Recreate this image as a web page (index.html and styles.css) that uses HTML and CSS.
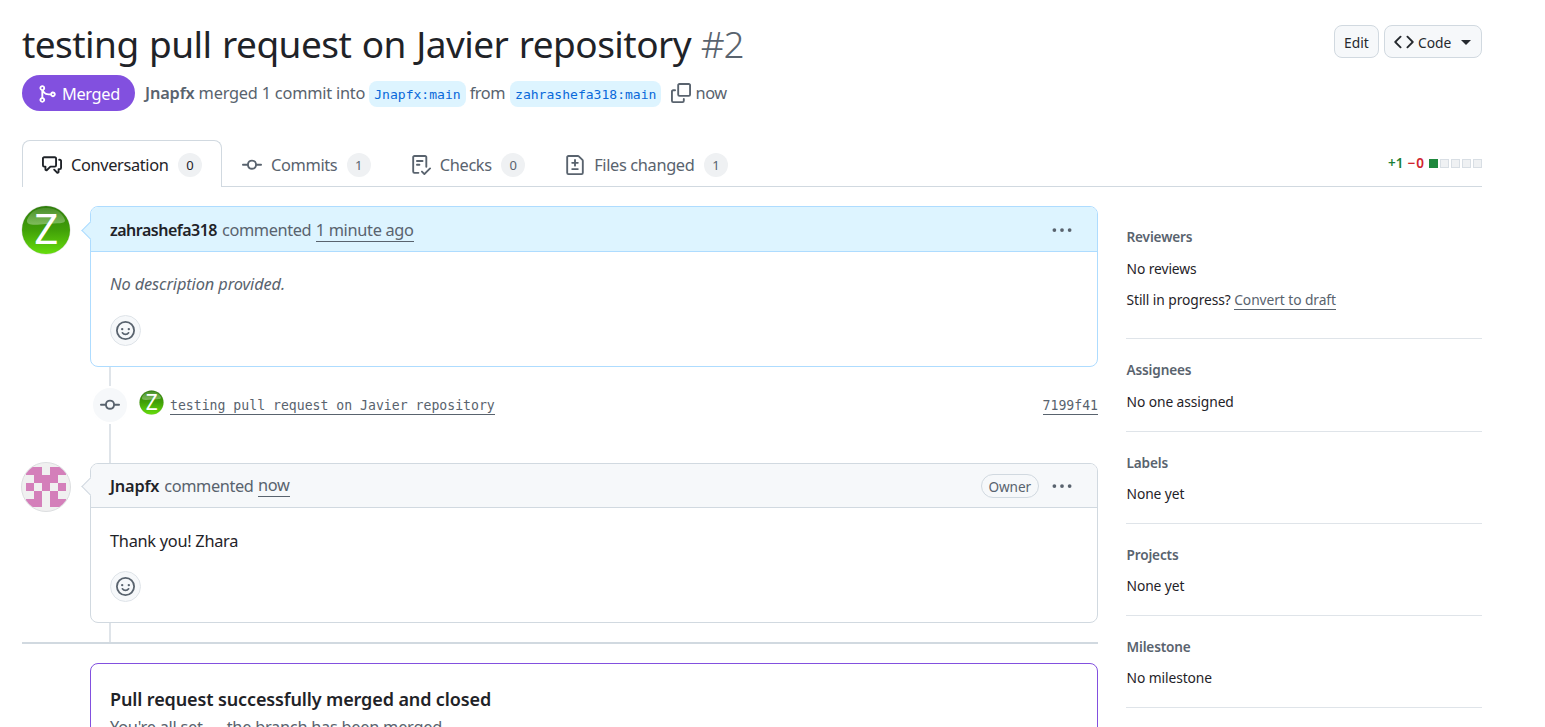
FILE: index.html
```html
<!DOCTYPE html>
<html lang="en">
<head>
<meta charset="utf-8">
<title>testing pull request on Javier repository #2</title>
<link rel="stylesheet" href="styles.css">
</head>
<body>
<svg class="defs" width="0" height="0">
  <defs>
    <linearGradient id="green" x1="0" y1="0" x2="0" y2="1">
      <stop offset="0" stop-color="#2f7d0c"/><stop offset=".5" stop-color="#41a008"/><stop offset="1" stop-color="#66dd0c"/>
    </linearGradient>
    <linearGradient id="gloss" x1="0" y1="0" x2="0" y2="1">
      <stop offset="0" stop-color="#fff" stop-opacity=".12"/><stop offset="1" stop-color="#fff" stop-opacity=".34"/>
    </linearGradient>
    <symbol id="z-avatar" viewBox="0 0 50 50">
      <circle cx="25" cy="25" r="24.5" fill="#d9dcd9"/>
      <circle cx="25" cy="25" r="24" fill="url(#green)"/>
      <path d="M6 15C10 5 18 3 25 3s15 2 19 12c1 4-8 3-19 4S5 21 6 15Z" fill="url(#gloss)"/>
      <text x="25.3" y="39" text-anchor="middle" font-family="Noto Sans, sans-serif" font-size="42" fill="#fff">Z</text>
    </symbol>
    <symbol id="commit" viewBox="0 0 16 16"><path d="M11.93 8.5a4.002 4.002 0 0 1-7.86 0H.75a.75.75 0 0 1 0-1.5h3.32a4.002 4.002 0 0 1 7.86 0h3.32a.75.75 0 0 1 0 1.5Zm-1.43-.75a2.5 2.5 0 1 0-5 0 2.5 2.5 0 0 0 5 0Z"/></symbol>
    <symbol id="smiley" viewBox="0 0 16 16"><circle cx="8" cy="8" r="7.25" fill="none" stroke="currentColor" stroke-width="1.5"/><circle cx="5.2" cy="6.8" r="1"/><circle cx="10.8" cy="6.8" r="1"/><path d="M5.4 9.9C6 10.8 6.9 11.2 8 11.2s2-.4 2.6-1.3" fill="none" stroke="currentColor" stroke-width="1.4" stroke-linecap="round"/></symbol>
    <symbol id="kebab" viewBox="0 0 16 16"><circle cx="1.9" cy="8" r="1.5"/><circle cx="8" cy="8" r="1.5"/><circle cx="14.1" cy="8" r="1.5"/></symbol>
  </defs>
</svg>
<div class="page">
  <header class="head">
    <h1 class="title"><span class="title-text">testing pull request on Javier repository</span> <span class="number">#2</span></h1>
    <div class="actions">
      <button class="btn btn-edit"><span>Edit</span></button>
      <button class="btn btn-code">
        <svg width="20" height="20" viewBox="0 0 16 16"><path d="m11.28 3.22 4.25 4.25a.75.75 0 0 1 0 1.06l-4.25 4.25a.749.749 0 0 1-1.275-.326.749.749 0 0 1 .215-.734L13.94 8l-3.72-3.72a.749.749 0 0 1 .326-1.275.749.749 0 0 1 .734.215Zm-6.56 0a.751.751 0 0 1 1.042.018.751.751 0 0 1 .018 1.042L2.06 8l3.72 3.72a.749.749 0 0 1-.326 1.275.749.749 0 0 1-.734-.215L.47 8.53a.75.75 0 0 1 0-1.06Z"/></svg>
        <span>Code</span><i class="caret"></i>
      </button>
    </div>
  </header>

  <div class="meta">
    <span class="state"><svg width="20" height="20" viewBox="0 0 16 16"><path d="M5.45 5.154A4.25 4.25 0 0 0 9.25 7.5h1.378a2.251 2.251 0 1 1 0 1.5H9.25A5.734 5.734 0 0 1 5 7.123v3.505a2.25 2.25 0 1 1-1.5 0V5.372a2.25 2.25 0 1 1 1.95-.218ZM4.25 13.5a.75.75 0 1 0 0-1.5.75.75 0 0 0 0 1.5Zm8.5-4.5a.75.75 0 1 0 0-1.5.75.75 0 0 0 0 1.5ZM5 3.25a.75.75 0 1 0 0 .005V3.25Z"/></svg><span class="state-text">Merged</span></span>
    <b class="who">Jnapfx</b><span class="action">merged 1 commit into</span><code class="branch">Jnapfx:main</code><span class="from">from</span><code class="branch branch-head">zahrashefa318:main</code>
    <svg class="copy" width="20" height="20" viewBox="0 0 16 16"><path d="M0 6.75C0 5.784.784 5 1.75 5h1.5a.75.75 0 0 1 0 1.5h-1.5a.25.25 0 0 0-.25.25v7.5c0 .138.112.25.25.25h7.5a.25.25 0 0 0 .25-.25v-1.5a.75.75 0 0 1 1.5 0v1.5A1.75 1.75 0 0 1 9.25 16h-7.5A1.75 1.75 0 0 1 0 14.25Z"/><path d="M5 1.75C5 .784 5.784 0 6.75 0h7.5C15.216 0 16 .784 16 1.75v7.5A1.75 1.75 0 0 1 14.25 11h-7.5A1.75 1.75 0 0 1 5 9.25Zm1.75-.25a.25.25 0 0 0-.25.25v7.5c0 .138.112.25.25.25h7.5a.25.25 0 0 0 .25-.25v-7.5a.25.25 0 0 0-.25-.25Z"/></svg>
    <span class="when">now</span>
  </div>

  <nav class="tabs">
    <a class="tab active"><svg width="20" height="20" viewBox="0 0 16 16"><path d="M1.75 1h8.5c.966 0 1.75.784 1.75 1.75v5.5A1.75 1.75 0 0 1 10.25 10H7.061l-2.574 2.573A1.458 1.458 0 0 1 2 11.543V10h-.25A1.75 1.75 0 0 1 0 8.25v-5.5C0 1.784.784 1 1.75 1ZM1.5 2.75v5.5c0 .138.112.25.25.25h1a.75.75 0 0 1 .75.75v2.19l2.72-2.72a.749.749 0 0 1 .53-.22h3.5a.25.25 0 0 0 .25-.25v-5.5a.25.25 0 0 0-.25-.25h-8.5a.25.25 0 0 0-.25.25Zm13 2a.25.25 0 0 0-.25-.25h-.5a.75.75 0 0 1 0-1.5h.5c.966 0 1.75.784 1.75 1.75v5.5A1.75 1.75 0 0 1 14.25 12H14v1.543a1.458 1.458 0 0 1-2.487 1.03L9.22 12.28a.749.749 0 0 1 .326-1.275.749.749 0 0 1 .734.215l2.22 2.22v-2.19a.75.75 0 0 1 .75-.75h1a.25.25 0 0 0 .25-.25Z"/></svg><span class="label">Conversation</span><span class="count">0</span></a>
    <a class="tab"><svg width="20" height="20"><use href="#commit"/></svg><span class="label">Commits</span><span class="count">1</span></a>
    <a class="tab"><svg width="20" height="20" viewBox="0 0 16 16"><path d="M2.5 1.75v11.5c0 .138.112.25.25.25h3.17a.75.75 0 0 1 0 1.5H2.75A1.75 1.75 0 0 1 1 13.25V1.75C1 .784 1.784 0 2.75 0h8.5C12.216 0 13 .784 13 1.75v7.736a.75.75 0 0 1-1.5 0V1.75a.25.25 0 0 0-.25-.25h-8.5a.25.25 0 0 0-.25.25Zm13.274 9.537-4.557 4.45a.75.75 0 0 1-1.055-.008l-1.943-1.95a.75.75 0 0 1 1.062-1.058l1.419 1.425 4.026-3.932a.75.75 0 1 1 1.048 1.074ZM4.75 4h4.5a.75.75 0 0 1 0 1.5h-4.5a.75.75 0 0 1 0-1.5ZM4 7.75A.75.75 0 0 1 4.75 7h2a.75.75 0 0 1 0 1.5h-2A.75.75 0 0 1 4 7.75Z"/></svg><span class="label">Checks</span><span class="count">0</span></a>
    <a class="tab"><svg width="20" height="20" viewBox="0 0 16 16"><path d="M1 1.75C1 .784 1.784 0 2.75 0h7.586c.464 0 .909.184 1.237.513l2.914 2.914c.329.328.513.773.513 1.237v9.586A1.75 1.75 0 0 1 13.25 16H2.75A1.75 1.75 0 0 1 1 14.25Zm1.75-.25a.25.25 0 0 0-.25.25v12.5c0 .138.112.25.25.25h10.5a.25.25 0 0 0 .25-.25V4.664a.25.25 0 0 0-.073-.177l-2.914-2.914a.25.25 0 0 0-.177-.073ZM8 3.25a.75.75 0 0 1 .75.75v1.5h1.5a.75.75 0 0 1 0 1.5h-1.5v1.5a.75.75 0 0 1-1.5 0V7h-1.5a.75.75 0 0 1 0-1.5h1.5V4A.75.75 0 0 1 8 3.25Zm-3 8a.75.75 0 0 1 .75-.75h4.5a.75.75 0 0 1 0 1.5h-4.5a.75.75 0 0 1-.75-.75Z"/></svg><span class="label">Files changed</span><span class="count">1</span></a>
    <div class="diffstat"><span class="added">+1</span><span class="removed">−0</span><i class="block on"></i><i class="block"></i><i class="block"></i><i class="block"></i><i class="block"></i></div>
  </nav>

  <div class="columns">
    <main class="main">
      <div class="entry">
        <svg class="avatar" width="50" height="50"><use href="#z-avatar"/></svg>
        <section class="comment own">
          <div class="comment-head"><b class="author author-long">zahrashefa318</b><span class="verb">commented</span><a class="time">1 minute ago</a><svg class="menu" width="20" height="20"><use href="#kebab"/></svg></div>
          <div class="comment-body"><p class="text"><em>No description provided.</em></p><button class="react"><svg width="20" height="20"><use href="#smiley"/></svg></button></div>
        </section>
      </div>
      <div class="timeline">
        <span class="node"><svg width="20" height="20"><use href="#commit"/></svg></span>
        <svg class="mini" width="25" height="25"><use href="#z-avatar"/></svg>
        <a class="commit-link">testing pull request on Javier repository</a>
        <a class="commit-link sha">7199f41</a>
      </div>
      <div class="entry">
        <svg class="avatar" width="50" height="50" viewBox="0 0 50 50">
          <clipPath id="round"><circle cx="25" cy="25" r="24"/></clipPath>
          <circle cx="25" cy="25" r="24.5" fill="#f0f0f0" stroke="#dcdee0"/>
          <path clip-path="url(#round)" fill="#d47fba" shape-rendering="crispEdges" d="M5 5h16v8h8V5h16v8h-8v8h8v8h-8v8h8v8H29V29h-8v16H5v-8h8v-8H5v-8h8v-8H5Z"/>
          <path fill="#f0f0f0" shape-rendering="crispEdges" d="M13 21h8v8h-8ZM29 21h8v8h-8Z"/>
        </svg>
        <section class="comment reply">
          <div class="comment-head"><b class="author">Jnapfx</b><span class="verb">commented</span><a class="time">now</a><span class="owner">Owner</span><svg class="menu" width="20" height="20"><use href="#kebab"/></svg></div>
          <div class="comment-body"><p class="text">Thank you! Zhara</p><button class="react"><svg width="20" height="20"><use href="#smiley"/></svg></button></div>
        </section>
      </div>
      <div class="tail"></div>
      <section class="merged">
        <h2 class="merged-title">Pull request successfully merged and closed</h2>
        <p class="merged-text">You're all set — the branch has been merged.</p>
      </section>
    </main>
    <aside class="side">
      <section class="block-row reviewers"><h3>Reviewers</h3><p><span>No reviews</span></p><p><span>Still in progress?</span> <a class="draft">Convert to draft</a></p></section>
      <section class="block-row assignees"><h3>Assignees</h3><p><span>No one assigned</span></p></section>
      <section class="block-row"><h3>Labels</h3><p><span>None yet</span></p></section>
      <section class="block-row"><h3>Projects</h3><p><span>None yet</span></p></section>
      <section class="block-row"><h3>Milestone</h3><p><span>No milestone</span></p></section>
    </aside>
  </div>
</div>
</body>
</html>
```
FILE: styles.css
```css
* { box-sizing: border-box; }
body {
  margin: 0;
  background: #fff;
  color: #1f2328;
  font-family: "Noto Sans", sans-serif;
  font-size: 16.35px;
}
h1, h2, h3, p { margin: 0; font-weight: 400; }
svg { display: block; flex: none; fill: currentColor; }
.defs { position: absolute; }
.page { width: 1482px; height: 727px; overflow: hidden; padding: 20px 0 0 22px; }

.head { display: flex; justify-content: space-between; height: 55px; }
.title { font-size: 37px; line-height: 48px; white-space: nowrap; }
.title-text { letter-spacing: -.55px; word-spacing: 1.4px; }
.number { color: #59636e; font-weight: 300; letter-spacing: -1px; }
.actions { display: flex; gap: 5px; padding-top: 5px; }
.btn {
  display: flex; align-items: center; height: 33px; padding: 0 9px;
  border: 1px solid #d1d9e0; border-radius: 8px; background: #f6f8fa;
  color: #25292e; font: 400 13.8px "Noto Sans", sans-serif;
}
.btn span { margin-top: 2px; }
.btn-edit { width: 45px; }
.btn-code { width: 98px; }
.btn-code span { margin: 2px 10px 0 4px; }
.caret { margin-top: 1px; border: 5px solid transparent; border-top-color: #25292e; border-bottom: 0; }

.meta { display: flex; align-items: center; height: 36px; color: #59636e; white-space: nowrap; }
.state {
  display: flex; align-items: center; gap: 5px; width: 113px; height: 36px;
  padding-left: 15px; margin-right: 10px; border-radius: 18px; background: #8250df; color: #fff;
}
.state svg { margin-top: 1px; }
.state-text { margin-top: 2px; letter-spacing: -.35px; }
.who { font-weight: 600; margin-right: 4px; letter-spacing: -.15px; }
.action { margin-right: 4px; letter-spacing: -.22px; }
.branch {
  height: 26px; padding: 2px 5px 0; margin: 2px 4px 0 0; border-radius: 8px;
  background: #ddf4ff; color: #0969da; font: 13.05px/24px "DejaVu Sans Mono", monospace;
}
.from { margin-right: 5px; letter-spacing: -.45px; }
.branch-head { margin-right: 10px; }
.copy { margin-right: 4px; }
.when { letter-spacing: -.4px; }

.tabs { display: flex; height: 47px; margin-top: 29px; border-bottom: 1px solid #d1d9e0; color: #59636e; }
.tab { display: flex; align-items: center; height: 47px; padding: 1px 19px 0; border: 1px solid transparent; border-bottom: 0; }
.tab.active { border-color: #d1d9e0; border-radius: 8px 8px 0 0; background: #fff; color: #1f2328; }
.label { margin: 0 9.5px 0 9px; white-space: nowrap; letter-spacing: -.35px; }
.count { width: 24px; height: 24px; border-radius: 12px; background: #eff1f3; font-size: 13px; line-height: 25px; text-align: center; }
.diffstat { display: flex; align-items: center; margin-left: auto; font-size: 13.5px; font-weight: 600; }
.added { color: #1a7f37; margin-right: 4px; }
.removed { color: #d1242f; margin-right: 4px; letter-spacing: 1px; }
.block { width: 9px; height: 9px; margin-left: 2px; border: 1px solid #d8dee4; background: #eff1f3; }
.block.on { border-color: #1f883d; background: #1f883d; margin-left: 0; }

.columns { display: flex; gap: 28px; padding-top: 19px; }
.main { width: 1076px; }
.entry { display: flex; gap: 19px; margin-left: -1px; }
.avatar { margin-top: -1px; }
.comment { position: relative; width: 1008px; height: 161px; border: 1px solid #d1d9e0; border-radius: 8px; background: #fff; }
.comment-head {
  display: flex; align-items: center; height: 45px; padding: 2px 25px 0 19px;
  border-bottom: 1px solid #d1d9e0; border-radius: 7px 7px 0 0; background: #f6f8fa; color: #59636e;
}
.comment::before {
  content: ""; position: absolute; left: -7px; top: 17px; width: 12px; height: 12px;
  border: solid #d1d9e0; border-width: 0 0 1px 1px; background: #f6f8fa; transform: rotate(45deg);
}
.own, .own .comment-head, .own::before { border-color: #aedcff; }
.own .comment-head, .own::before { background: #ddf4ff; }
.reply { height: 160px; }
.reply::before { top: 16px; }
.reply .comment-head { height: 44px; padding-top: 0; }
.reply .text { padding-top: 1px; }
.author { color: #1f2328; font-weight: 600; margin-right: 5px; letter-spacing: -.2px; }
.author-long { font-size: 16px; letter-spacing: -.5px; }
.verb { margin-right: 4.5px; letter-spacing: -.4px; }
.time { margin-top: 1px; border-bottom: 1px solid #59636e; line-height: 21px; letter-spacing: -.32px; }
.menu { margin-left: auto; }
.owner { height: 24px; padding: 0 7px; margin-left: auto; border: 1px solid #d1d9e0; border-radius: 12px; font-size: 13.6px; line-height: 24px; letter-spacing: -.1px; }
.owner + .menu { margin-left: 13px; }
.comment-body { padding: 19px 19px 20px; }
.text { height: 44px; line-height: 26px; letter-spacing: -.28px; }
em { color: #59636e; letter-spacing: -.1px; }
.react { display: grid; place-items: center; width: 31px; height: 31px; padding: 0; border: 1px solid #dfe4e9; border-radius: 50%; background: #f6f8fa; color: #59636e; }
.react svg { width: 19px; height: 19px; }
.timeline {
  display: flex; height: 96px; padding: 21px 0 0 69px;
  background: linear-gradient(#dfe4e9, #dfe4e9) 87px 0 / 2px 100% no-repeat; color: #59636e;
}
.node { display: grid; place-items: center; width: 38px; height: 38px; margin-top: -2px; border: 2px solid #fff; border-radius: 50%; background: #f6f8fa; }
.mini { margin: 2px 6px 0 10px; }
.commit-link { height: 20px; margin-top: 7px; border-bottom: 1px solid #59636e; font: 13.17px/22px "DejaVu Sans Mono", monospace; }
.sha { margin-left: auto; }
.tail { height: 21px; background: linear-gradient(#dfe4e9, #dfe4e9) 87px 0 / 2px 100% no-repeat; border-bottom: 2px solid #d1d9e0; }
.merged { height: 200px; margin: 19px 0 0 68px; padding: 22px 19px; border: 1px solid #8250df; border-radius: 8px; }
.merged-title { font-size: 18px; line-height: 26px; font-weight: 600; letter-spacing: -.12px; }
.merged-text { padding-top: 2px; line-height: 26px; color: #59636e; letter-spacing: -.26px; }

.side { width: 356px; font-size: 13.8px; line-height: 22px; letter-spacing: -.08px; }
.block-row { padding: 20px 0 18px .5px; border-bottom: 1px solid #d1d9e0b3; }
.block-row h3 { font-size: 13.6px; font-weight: 600; color: #59636e; letter-spacing: -.15px; }
.block-row p { margin-top: 9px; }
.reviewers { padding-bottom: 27px; }
.reviewers h3 + p, .assignees p { margin-top: 10px; }
.draft { color: #59636e; border-bottom: 1px solid #59636e; }
```
